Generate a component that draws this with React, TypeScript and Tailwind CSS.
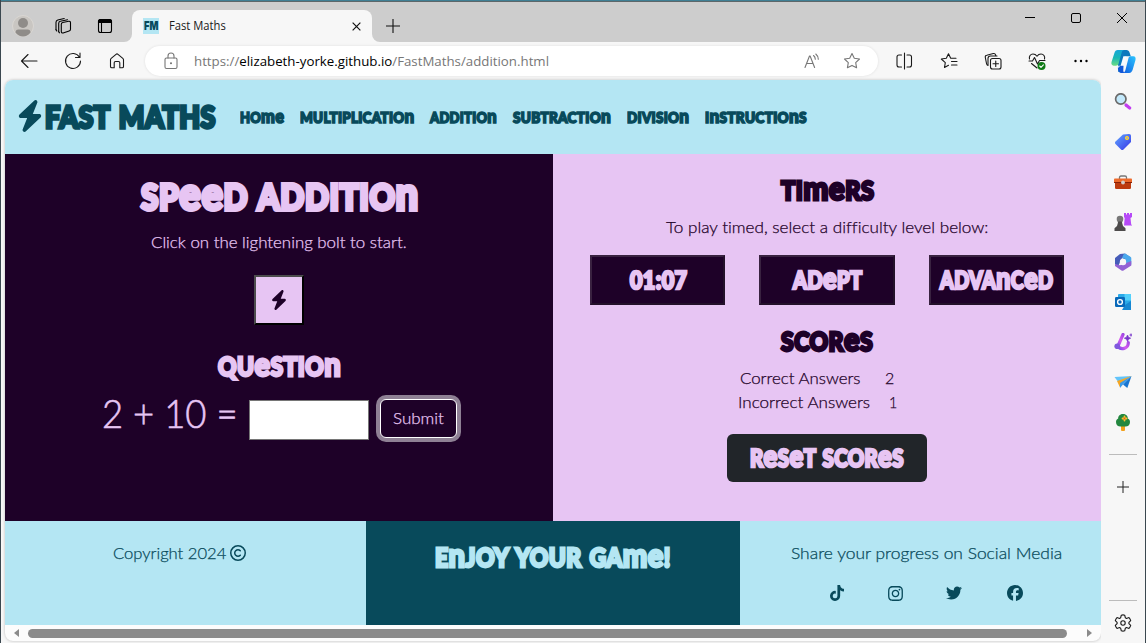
import React, { useLayoutEffect, useRef, useState } from "react";
import { FaBolt, FaTiktok, FaInstagram, FaTwitter, FaFacebook, FaRegCopyright } from "react-icons/fa6";

/* Stretches a single line of text to the width of its box. */
function Fit({ className = "", children }: { className?: string; children: React.ReactNode }) {
  const box = useRef<HTMLSpanElement>(null);
  const line = useRef<HTMLSpanElement>(null);
  const [ratio, setRatio] = useState(1);
  useLayoutEffect(() => {
    if (box.current && line.current && line.current.offsetWidth) {
      setRatio(box.current.clientWidth / line.current.offsetWidth);
    }
  }, []);
  return (
    <span ref={box} className={"flex shrink-0 items-center leading-none whitespace-nowrap [font-variant-ligatures:none] " + className}>
      <span ref={line} className="block shrink-0 origin-left" style={{ transform: `scaleX(${ratio})` }}>
        {children}
      </span>
    </span>
  );
}

/* Display lettering in which e, m and n keep their small form at capital height. */
function Display({ className = "", text }: { className?: string; text: string }) {
  return (
    <Fit className={"font-['Lato',sans-serif] font-black tracking-[0.02em] [word-spacing:0.08em] [-webkit-text-stroke:0.11em_currentColor] " + className}>
      {text.split(/([emn]+)/).map((part, i) =>
        i % 2 ? (
          <span key={i} className="text-[1.27em] leading-[0]">{part}</span>
        ) : (
          <span key={i} className="uppercase">{part}</span>
        ),
      )}
    </Fit>
  );
}

function Icon({ children, className = "size-5" }: { children: React.ReactNode; className?: string }) {
  return (
    <svg viewBox="0 0 20 20" fill="none" stroke="currentColor" strokeWidth="1.1" strokeLinecap="round" strokeLinejoin="round" className={"shrink-0 " + className}>
      {children}
    </svg>
  );
}

function Slot({ className, children }: { className: string; children: React.ReactNode }) {
  return <div className={"flex shrink-0 items-center justify-center " + className}>{children}</div>;
}

function TitleBar() {
  return (
    <div className="flex h-10 bg-[#cdcdcd]">
      <Slot className="ml-[2px] h-[48px] w-10">
        <svg viewBox="0 0 22 22" className="size-[22px]">
          <circle cx="11" cy="11" r="10.5" fill="#c9c6c2" stroke="#dad7d3" />
          <circle cx="11" cy="8" r="5" fill="#8f8c89" />
          <path d="M3.500 17.500c0-2 1-3 3-3h9c2 0 3 1 3 3-2 2.500-4.500 4-7.500 4s-5.500-1.500-7.500-4Z" fill="#8f8c89" />
        </svg>
      </Slot>
      <Slot className="h-[48px] w-10">
        <Icon>
          <path d="M8.300 8.200c0-.9.500-1.500 1.400-1.700l6-1.200c1-.2 1.800.4 1.800 1.400v6.600c0 .9-.5 1.500-1.400 1.700l-6 1.900c-1 .3-1.800-.3-1.800-1.300Z" />
          <path d="M5.700 15.500V7.300c0-1.200.6-1.900 1.700-2.100l7.100-1.500M3 13.500V6.300c0-1.300.7-2 1.800-2.300l6.400-1.500" />
          <path d="M3 13.500c0 .7.300 1.100.8 1.500M5.700 15.500c0 .6.300 1 .8 1.300" />
        </Icon>
      </Slot>
      <Slot className="h-[48px] w-11">
        <Icon className="size-5 text-black">
          <rect x="3.500" y="3.500" width="13" height="13" rx="2" />
          <path d="M3.500 6.500v-1a2 2 0 0 1 2-2h9a2 2 0 0 1 2 2v1Z" fill="currentColor" />
          <path d="M6.500 7v9.500" />
        </Icon>
      </Slot>
      <div className="flex w-2 shrink-0 items-end bg-[#f7f7f7] -ml-[3px]">
        <div className="h-full w-2 rounded-br-lg bg-[#cdcdcd]" />
      </div>
      <div className="mt-2 flex w-[240px] shrink-0 items-center rounded-t-lg bg-[#f7f7f7] pl-[11px]">
        <div className="flex size-4 items-center justify-center bg-[#b4e6f3] text-[#084a5b]">
          <Fit className="mb-px h-4 w-[14px] font-['Inter',sans-serif] text-[12px] font-black">FM</Fit>
        </div>
        <Fit className="ml-[10px] h-4 w-[57px] font-['Open_Sans',sans-serif] text-[12px] text-[#1a1a1a]">Fast Maths</Fit>
        <Slot className="ml-[120px] h-6 w-5">
          <svg viewBox="0 0 10 10" className="size-[9px]" stroke="#111" strokeWidth="1.300"><path d="M.7.7l8.600 8.600M9.300.7L.7 9.300" /></svg>
        </Slot>
      </div>
      <div className="w-2 shrink-0 bg-[#f7f7f7]"><div className="h-full w-2 rounded-bl-lg bg-[#cdcdcd]" /></div>
      <Slot className="h-[47px] w-[26px]">
        <svg viewBox="0 0 14 14" className="size-[14px]" stroke="#111" strokeWidth="1.100"><path d="M7 0v14M0 7h14" /></svg>
      </Slot>
      <div className="grow" />
      <Slot className="h-[31px] w-[46px]"><div className="h-px w-[10px] bg-black" /></Slot>
      <Slot className="h-[31px] w-[46px]"><div className="size-[10px] rounded-[2px] border border-black" /></Slot>
      <Slot className="h-[31px] w-[46px]">
        <svg viewBox="0 0 10 10" className="size-[10px]" stroke="#000" strokeWidth="1"><path d="M0 0l10 10M10 0L0 10" /></svg>
      </Slot>
    </div>
  );
}

const starPath = "M10 2.500l2.300 4.700 5.200.8-3.800 3.600.9 5.200L10 14.400l-4.600 2.400.9-5.200L2.500 8l5.200-.8Z";

function ToolBar() {
  return (
    <div className="flex h-[38px] items-center bg-[#f7f7f7] text-[#1a1a1a]">
      <Slot className="ml-[6px] w-11">
        <Icon><path d="M18 10H2.500M9 3.500L2.500 10 9 16.500" /></Icon>
      </Slot>
      <Slot className="w-11">
        <Icon><path d="M16.500 6.200A7.500 7.500 0 1 0 17.500 10M17 2v4.500h-4.500" /></Icon>
      </Slot>
      <Slot className="w-11">
        <Icon><path d="M3.500 8.800c0-.6.200-1 .7-1.400L9 3.300c.6-.5 1.400-.5 2 0l4.800 4.100c.5.400.7.800.7 1.400v6.700c0 .8-.5 1.300-1.300 1.300h-2.400v-5c0-.8-.5-1.300-1.300-1.300h-3c-.8 0-1.300.5-1.300 1.300v5H4.800c-.8 0-1.300-.5-1.300-1.300Z" /></Icon>
      </Slot>
      <div className="ml-[6px] flex h-[30px] w-[733px] shrink-0 items-center rounded-full bg-white pl-4 text-[#777] shadow-[0_0_3px_rgba(0,0,0,0.1)]">
        <Slot className="w-5">
          <Icon><rect x="4" y="7" width="12" height="10.500" rx="1.500" /><path d="M7 7V5a3 3 0 0 1 6 0v2" /><circle cx="10" cy="12.200" r=".5" fill="currentColor" /></Icon>
        </Slot>
        <Fit className="mt-[2px] ml-[13px] h-5 w-[355px] font-['Open_Sans',sans-serif] text-[13.500px]">
          https://<span className="text-black">elizabeth-yorke.github.io</span>/FastMaths/addition.html
        </Fit>
        <Slot className="ml-[253px] w-5">
          <Icon><path d="M3 16.500L7.500 5h.6l4.500 11.500M4.600 12.500H11M11.500 4.500c1.200 1 1.800 2.200 1.800 3.700M13.800 3c1.700 1.400 2.500 3.200 2.500 5.300" /></Icon>
        </Slot>
        <Slot className="ml-5 w-5"><Icon><path d={starPath} /></Icon></Slot>
      </div>
      <Slot className="ml-1 w-11">
        <Icon><path d="M10.500 2v16M7.500 4H5a2 2 0 0 0-2 2v8a2 2 0 0 0 2 2h2.500M13 4h2.500a2 2 0 0 1 2 2v8a2 2 0 0 1-2 2H13" /></Icon>
      </Slot>
      <Slot className="w-[45px]">
        <Icon><path d="M9.500 14.300l-4 2.200.8-4.800L2.300 8l5-.7L9.500 2.700l2.200 4.500H17M12.500 10.500H18M12.500 14H18" /></Icon>
      </Slot>
      <Slot className="w-11">
        <Icon>
          <rect x="7.500" y="7.500" width="10.500" height="10.500" rx="2" />
          <path d="M12.750 10v5.500M10 12.750h5.500M5 14.500c-.8-.1-1.200-.6-1.400-1.500L2.300 6.300c-.2-1.100.4-1.900 1.500-2.100l6.500-1.700c1-.2 2 .3 2.300 1.300l.2 1M5 14.500V7.500C5 6 6 5 7.500 5H14" />
        </Icon>
      </Slot>
      <Slot className="w-11">
        <Icon>
          <path d="M2.500 8C1.800 5.300 3.500 3 6 3c1.700 0 3 .8 4 2.200C11 3.800 12.300 3 14 3c2.500 0 4.300 2.300 3.500 5M2 10h3.500L7.500 6.500l3 6.500 2-3.500H18M4.500 12.500L10 17" />
          <circle cx="14.500" cy="15" r="4" fill="#0f7b16" stroke="none" />
          <path d="M12.700 15l1.300 1.300 2.400-2.400" stroke="#fff" />
        </Icon>
      </Slot>
      <Slot className="w-11">
        <Icon className="size-5 text-black"><g fill="currentColor" stroke="none"><circle cx="4.500" cy="10" r="1.200" /><circle cx="10" cy="10" r="1.200" /><circle cx="15.500" cy="10" r="1.200" /></g></Icon>
      </Slot>
      <Slot className="ml-[-2px] w-11">
        <svg viewBox="0 0 24 24" className="size-[25px]">
          <defs>
            <linearGradient id="cpA" x1="0" y1="0" x2="0" y2="1"><stop offset="0" stopColor="#16a6d8" /><stop offset=".5" stopColor="#18b8b5" /><stop offset="1" stopColor="#6ddc83" /></linearGradient>
            <linearGradient id="cpB" x1="1" y1="0" x2="0" y2="1"><stop offset="0" stopColor="#2cc6ff" /><stop offset="1" stopColor="#0f5be0" /></linearGradient>
          </defs>
          <path d="M6.500 1h8.300c1.600 0 2.600 1 3 2.400L19 7h-3.500c-1.500 0-2.300.8-2.800 2.200L9.500 20c-.5 1.500-1.400 2-2.600 2Z" fill="#0b78bd" />
          <path d="M7 16h2.200l2.700-9h3.200l-3.500 12H8c-.8 0-1.200-1.500-1-3Z" fill="#f7fbff" />
          <path d="M6.500 1H13c-1.500 0-2.300 1-2.800 2.500L7.300 14c-.4 1.500-1.300 2-2.600 2H2.500C.8 16 0 14.500.5 12.500L3.200 4C3.800 2 4.800 1 6.500 1Z" fill="url(#cpA)" />
          <path d="M8.500 16H12l-.2 5c.2 1.200 1 2 2 2H9.500C7.500 23 7 20 6.500 18c1 0 1.500-1 2-2Z" fill="#1157d8" />
          <path d="M17.500 23H11c1.500 0 2.300-1 2.800-2.500L16.700 9c.4-1.500 1.300-2 2.600-2h2.200c1.700 0 2.500 1.500 2 3.500L20.800 20c-.6 2-1.600 3-3.300 3Z" fill="url(#cpB)" />
        </svg>
      </Slot>
    </div>
  );
}

function SideIcon({ children }: { children: React.ReactNode }) {
  return (
    <div className="flex h-10 shrink-0 items-center justify-center">
      <svg viewBox="0 0 18 18" className="size-[18px]">{children}</svg>
    </div>
  );
}

function SideBar() {
  return (
    <aside className="flex w-[43px] shrink-0 flex-col bg-[#f7f7f7] pt-[2px]">
      <SideIcon>
        <path d="M12 12l3.700 3" stroke="#c23df0" strokeWidth="3.200" strokeLinecap="round" />
        <circle cx="6.800" cy="6" r="5.200" fill="#c3e9fb" stroke="#6b6b6b" strokeWidth="1.700" />
      </SideIcon>
      <SideIcon>
        <defs><linearGradient id="tag" x1="0" y1="0" x2="1" y2="1"><stop stopColor="#62a8ff" /><stop offset="1" stopColor="#3534e6" /></linearGradient></defs>
        <path d="M9 1.500l6-.5c1.300 0 2 .7 2 2v6l-7.500 7.500c-.8.700-1.700.7-2.500 0L1.500 11c-.7-.8-.7-1.700 0-2.500Z" fill="url(#tag)" />
        <circle cx="13" cy="5" r="1.700" fill="#b9b39c" stroke="#fbd329" />
      </SideIcon>
      <SideIcon>
        <path d="M5.500 6V4.500C5.500 3.500 6 3 7 3h4c1 0 1.500.5 1.500 1.500V6" fill="none" stroke="#777" strokeWidth="1.300" />
        <rect x="1" y="6" width="16" height="10" rx="1.300" fill="#bc3b0f" />
        <path d="M0 6.500C0 6 .5 5.500 1 5.500h16c.5 0 1 .5 1 1V9H0Z" fill="#ed6b2c" />
        <rect x="0" y="9" width="18" height="1" fill="#872107" />
        <circle cx="9" cy="9.500" r="1.900" fill="#d2cdc9" />
      </SideIcon>
      <SideIcon>
        <path d="M10 0h2v1.500h1V0h2v1.500h1V0h2v4l-1.500 1 .7 6.500 1.300 1H10l.7-7.500L10 4Z" fill="#b64af7" />
        <circle cx="6" cy="6" r="3.300" fill="#777" />
        <path d="M3.500 8.500h5l-.5 1 1 3.500 2.500 2.200V18H.5v-2.800L3 13l1-3.500Z" fill="#4d4b4b" />
      </SideIcon>
      <SideIcon>
        <path d="M6 1l5-.5 5 3.500-5 2.500-3-1.500L4 13.500 1 11V5Z" fill="#465cb9" />
        <path d="M11 .5l5 3c1 .6 1.300 1 1.300 2v6l-6 .5V6L8 5l1.500-3.500Z" fill="#4aa8ec" />
        <path d="M17.300 8v4.500L9.500 17.500c-.7.400-1.300.3-2 0L1 13v-2l5 1.200 5.500-2Z" fill="#9362d4" />
        <circle cx="9" cy="9" r="3.200" fill="#f7f7f7" />
      </SideIcon>
      <SideIcon>
        <rect x="4" y="1" width="13" height="13" rx="1" fill="#2aa9e8" />
        <path d="M10.500 1H17v6.500h-6.500Z" fill="#53d0fb" />
        <path d="M8 17h9V8l-6 4Z" fill="#1687d2" />
        <rect x="1" y="4" width="10" height="10" rx="1.200" fill="#0868b9" />
        <circle cx="6" cy="9" r="2.400" fill="none" stroke="#fff" strokeWidth="1.400" />
      </SideIcon>
      <SideIcon>
        <defs><linearGradient id="mus" x1="1" y1="0" x2="0" y2="1"><stop stopColor="#813bdd" /><stop offset=".6" stopColor="#d65bf0" /><stop offset="1" stopColor="#7548e8" /></linearGradient></defs>
        <path d="M9 1.500L4 13c2.500 4.500 10.500 3 10.300-3.500" fill="none" stroke="url(#mus)" strokeWidth="3.200" strokeLinecap="round" strokeLinejoin="round" />
        <circle cx="3.200" cy="13.200" r="2.800" fill="#8058dd" />
        <path d="M13.500 2l1 2.200 2.200 1-2.200 1-1 2.300-1-2.300-2.200-1 2.200-1Z" fill="#7836cb" stroke="#7836cb" strokeWidth=".7" />
        <path d="M17 .5v3M15.500 2h2.500" stroke="#7836cb" />
      </SideIcon>
      <SideIcon>
        <path d="M.5 4L17.500 3 6 9.500 3.500 8Z" fill="#62c4fa" />
        <path d="M17.500 3l-4.200 12L9 11.500Z" fill="#1976d1" />
        <path d="M6 9l11.500-6L9 11.500 6 15Z" fill="#3999e8" />
        <path d="M3 8l14.500-5L6 10v4.500Z" fill="#f5a623" />
      </SideIcon>
      <SideIcon>
        <rect x="7" y="12" width="4" height="6" rx="1" fill="#f3a11b" />
        <path d="M9 1C5.500 1 4 3.500 4.200 5.500 2.500 6.200 2 7.500 2 9c0 3 2 4.500 4.500 4.500h5C14 13.500 16 12 16 9c0-1.500-.5-2.800-2.200-3.500C14 3.500 12.500 1 9 1Z" fill="#23873f" />
        <path d="M10.500 3.500v4M8.500 5.500h4" stroke="#fdbf2d" strokeWidth="1.800" strokeLinecap="round" />
        <circle cx="10.500" cy="5.500" r=".9" fill="#df5e20" />
      </SideIcon>
      <div className="mt-3 ml-2 h-px w-7 bg-[#bcbcbc]" />
      <Slot className="mt-[22px] h-5 text-[#222]">
        <svg viewBox="0 0 12 12" className="size-3" stroke="currentColor" strokeWidth="1"><path d="M6 0v12M0 6h12" /></svg>
      </Slot>
      <div className="mt-[103px] ml-2 h-px w-7 shrink-0 bg-[#bcbcbc]" />
      <Slot className="mt-3 h-5 text-[#1a1a1a]">
        <Icon>
          <circle cx="10" cy="10" r="2.200" />
          <path d="M8.300 2.200c1-.4 2.400-.4 3.400 0l.6 2.500 1.200.7 2.500-.8c.8.8 1.400 1.900 1.700 3L15.900 9.300v1.400l1.800 1.700c-.3 1.100-.9 2.200-1.700 3l-2.500-.8-1.200.7-.6 2.500c-1 .4-2.400.4-3.400 0l-.6-2.500-1.200-.7-2.500.8c-.8-.8-1.400-1.900-1.700-3l1.800-1.700V9.300L2.300 7.600c.3-1.100.9-2.200 1.700-3l2.500.8 1.200-.7Z" />
        </Icon>
      </Slot>
    </aside>
  );
}

const body = "font-['Lato',sans-serif] font-light [-webkit-text-stroke:0.25px_currentColor] ";

function Header() {
  return (
    <header className="flex h-[74px] shrink-0 items-center bg-[#b4e6f3] pl-3 text-[#084a5b]">
      <FaBolt className="mb-[2px] h-8 w-[26px] shrink-0" preserveAspectRatio="none" />
      <Display className="mb-[3px] ml-[2px] h-8 w-[171px] text-[30px]" text="FAST MATHS" />
      <nav className="mt-px ml-6 flex gap-4">
        <Display className="h-5 w-11 text-[15px]" text="Home" />
        <Display className="h-5 w-[114px] text-[15px]" text="Multiplication" />
        <Display className="h-5 w-[67px] text-[15px]" text="Addition" />
        <Display className="h-5 w-[98px] text-[15px]" text="Subtraction" />
        <Display className="h-5 w-[62px] text-[15px]" text="Division" />
        <Display className="h-5 w-[102px] text-[15px]" text="Instructions" />
      </nav>
    </header>
  );
}

function Game() {
  return (
    <section className="flex w-[548px] shrink-0 flex-col items-center bg-[#1e0128] text-[#e7c5f3]">
      <Display className="mt-[22px] ml-[2px] h-10 w-[278px] text-[36px]" text="Speed Addition" />
      <Fit className={body + "mt-4 h-5 w-[256px] text-[16px]"}>Click on the lightening bolt to start.</Fit>
      <button className="mt-[23px] flex size-[50px] shrink-0 items-center justify-center border-2 border-t-[#4c4c4c] border-r-black border-b-black border-l-[#4c4c4c] bg-[#e7c5f3] text-[#1e0128]">
        <FaBolt className="h-5 w-4" preserveAspectRatio="none" />
      </button>
      <Display className="mt-[25px] ml-px h-8 w-[123px] text-[26px]" text="Question" />
      <div className="mt-3 flex h-12 w-full items-center pl-[97px]">
        <Fit className="mb-[11px] h-9 w-[136px] font-['Lato',sans-serif] text-[40px] font-light [-webkit-text-stroke:0.6px_currentColor]">2 + 10 =</Fit>
        <input aria-label="Answer" className="ml-[11px] mt-[4px] h-10 w-[120px] shrink-0 border border-[#767676] bg-white" />
        <button className="ml-[11px] flex h-[39px] w-[77px] shrink-0 items-center justify-center rounded-md border border-white bg-[#1e0128] ring-4 ring-[#8e8094]">
          <Fit className={body + "h-5 w-[51px] text-[16px]"}>Submit</Fit>
        </button>
      </div>
    </section>
  );
}

const timerButton = "flex h-[50px] shrink-0 items-center justify-center border-2 border-t-[#392240] border-r-[#231029] border-b-[#231029] border-l-[#392240] bg-[#1e0128] text-[#e7c5f3]";

function Results() {
  return (
    <section className="flex w-[548px] shrink-0 flex-col items-center bg-[#e7c5f3] text-[#1e0128]">
      <Display className="mt-[20px] h-8 w-[93px] text-[26px]" text="Timers" />
      <Fit className={body + "mt-[11px] h-5 w-[322px] text-[16px]"}>To play timed, select a difficulty level below:</Fit>
      <div className="mt-[18px] flex gap-[34px]">
        <button className={timerButton + " w-[135px]"}><Display className="ml-px h-8 w-[57px] text-[24px]" text="01:07" /></button>
        <button className={timerButton + " w-[136px]"}><Display className="h-8 w-[69px] text-[24px]" text="Adept" /></button>
        <button className={timerButton + " w-[135px]"}><Display className="h-8 w-[113px] text-[24px]" text="Advanced" /></button>
      </div>
      <Display className="mt-[20px] h-8 w-[92px] text-[26px]" text="Scores" />
      <div className={body + "mt-[11px] flex w-[178px] flex-col text-[16px]"}>
        <div className="flex h-6 items-start pl-[2px]">
          <Fit className="h-5 w-[121px]">Correct Answers</Fit>
          <Fit className="ml-6 h-5 w-[9px]">2</Fit>
        </div>
        <div className="flex h-6 items-start">
          <Fit className="h-5 w-[132px]">Incorrect Answers</Fit>
          <Fit className="ml-[19px] h-5 w-[8px]">1</Fit>
        </div>
      </div>
      <button className="mt-[18px] flex h-12 w-[200px] shrink-0 items-center justify-center rounded-md bg-[#212529] text-[#e7c5f3]">
        <Display className="h-8 w-[154px] text-[24px]" text="Reset Scores" />
      </button>
    </section>
  );
}

function Footer() {
  return (
    <footer className="flex h-[104px] shrink-0 bg-[#b4e6f3] text-[#084a5b]">
      <div className="flex w-[361px] justify-center pt-[22px] pr-3">
        <Fit className={body + "h-5 w-[113px] text-[16px]"}>Copyright 2024</Fit>
        <FaRegCopyright className="mt-[2px] ml-1 size-4" />
      </div>
      <div className="flex w-[374px] justify-center bg-[#084a5b] pt-5 text-[#b4e6f3]">
        <Display className="h-8 w-[236px] text-[26px]" text="Enjoy your Game!" />
      </div>
      <div className="flex w-[361px] flex-col pt-[22px]">
        <Fit className={body + "ml-[51px] h-5 w-[271px] text-[16px]"}>Share your progress on Social Media</Fit>
        <div className="mt-[22px] ml-[89px] flex">
          <FaTiktok className="size-4" />
          <FaInstagram className="ml-[42px] size-[17px]" />
          <FaTwitter className="ml-[42px] size-4" />
          <FaFacebook className="ml-[45px] size-4" />
        </div>
      </div>
    </footer>
  );
}

export default function App() {
  return (
    <div className="flex h-[643px] w-[1146px] flex-col overflow-hidden border-r border-l border-[#3b4850] bg-[#f7f7f7]">
      <div className="h-px shrink-0 bg-[#3f7f94]" />
      <div className="h-px shrink-0 bg-[#5c676a]" />
      <TitleBar />
      <ToolBar />
      <div className="flex h-[563px]">
        <div className="ml-1 flex h-[561px] w-[1096px] shrink-0 flex-col overflow-hidden rounded-lg bg-[#fcfcfc] shadow-[0_0_3px_rgba(0,0,0,0.25)]">
          <Header />
          <main className="flex h-[367px] shrink-0">
            <Game />
            <Results />
          </main>
          <Footer />
          <div className="flex h-4 shrink-0 items-center pl-[9px] text-[#8b8b8b]">
            <svg viewBox="0 0 5 8" className="h-2 w-[5px]" fill="currentColor"><path d="M5 0v8L0 4Z" /></svg>
            <div className="ml-[9px] h-[9px] w-[1039px] rounded-full bg-current" />
            <svg viewBox="0 0 5 8" className="ml-5 h-2 w-[5px]" fill="currentColor"><path d="M0 0v8l5-4Z" /></svg>
          </div>
        </div>
        <SideBar />
      </div>
    </div>
  );
}
